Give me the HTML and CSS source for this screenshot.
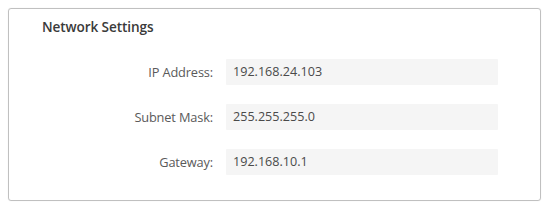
FILE: index.html
```html
<!DOCTYPE html>
<html>
<head>
<meta charset="utf-8">
<link rel="stylesheet" href="styles.css">
</head>
<body>
<div class="card">
  <div class="title">Network Settings</div>
  <div class="rows">
    <div class="label">IP Address:</div>
    <div class="field">192.168.24.103</div>
    <div class="label">Subnet Mask:</div>
    <div class="field">255.255.255.0</div>
    <div class="label">Gateway:</div>
    <div class="field">192.168.10.1</div>
  </div>
</div>
</body>
</html>
```
FILE: styles.css
```css
html, body {
  margin: 0;
  padding: 0;
  background: #ffffff;
}
body {
  padding: 8px 2px 3px 8px;
  font-family: "Open Sans", "Liberation Sans", sans-serif;
}
.card {
  box-sizing: border-box;
  width: 533px;
  height: 193px;
  border: 1px solid #c0c0c0;
  border-radius: 3px;
  box-shadow: 0 0 1px rgba(0,0,0,0.15);
  padding: 10px 0 0 33px;
}
.title {
  font-size: 13.6px;
  font-weight: 600;
  color: #3a3a3a;
  line-height: 16px;
  letter-spacing: -0.1px;
}
.rows {
  margin-top: 24px;
  display: grid;
  grid-template-columns: 171px 272px;
  column-gap: 13px;
  row-gap: 19px;
  align-items: center;
}
.label {
  text-align: right;
  font-size: 12.8px;
  color: #5a5a5a;
  letter-spacing: -0.15px;
}
.field {
  box-sizing: border-box;
  height: 26px;
  line-height: 26px;
  background: #f5f5f5;
  padding-left: 7px;
  font-size: 12.6px;
  color: #4a4a4a;
  letter-spacing: 0;
  border-radius: 1px;
}
```
